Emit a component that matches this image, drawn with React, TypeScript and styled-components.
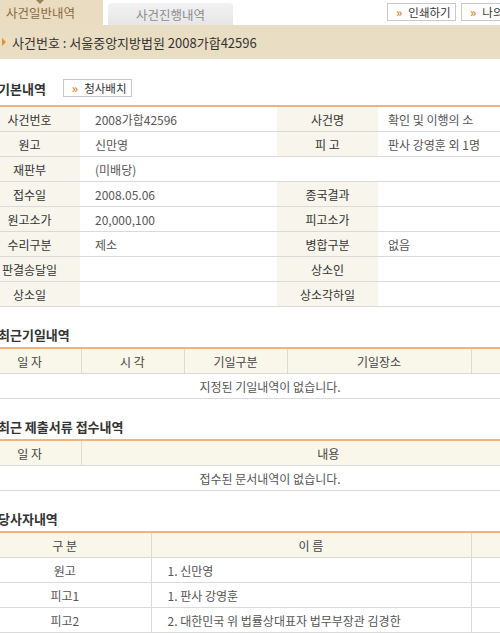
import React from "react";
import styled, { createGlobalStyle, css } from "styled-components";

const GlobalStyle = createGlobalStyle`
  body {
    margin: 0;
    overflow: hidden;
    background: #fff;
    font-family: "Noto Sans CJK KR", "Noto Sans", sans-serif;
    font-size: 12px;
    color: #444;
  }
`;

const Page = styled.div`
  width: 610px;
  margin-left: -35px;
`;

const TopRow = styled.div`
  display: flex;
  justify-content: space-between;
  height: 25px;
  padding-left: 13px;
`;

const Tabs = styled.div`
  display: flex;
  align-items: flex-end;
  gap: 5px;
`;

const Tab = styled.div<{ $active?: boolean }>`
  position: relative;
  width: 125px;
  display: flex;
  align-items: center;
  justify-content: center;
  font-size: 12.5px;
  ${({ $active }) =>
    $active
      ? css`
          height: 25px;
          background: #e9dcc0;
          color: #8a6a44;
          &::before {
            content: "";
            position: absolute;
            top: 0;
            left: 58px;
            border-left: 4px solid transparent;
            border-right: 4px solid transparent;
            border-top: 4px solid #a08058;
          }
        `
      : css`
          height: 22px;
          background: linear-gradient(#f2f2f2, #e6e6e6);
          border-radius: 4px 4px 0 0;
          color: #8c8c8c;
        `}
`;

const ButtonGroup = styled.div`
  display: flex;
  gap: 5px;
  padding: 3px 34px 0 0;
`;

const SmallButton = styled.button<{ $w: number }>`
  width: ${({ $w }) => $w}px;
  height: 18px;
  display: flex;
  align-items: center;
  gap: 6px;
  padding: 0 0 0 8px;
  background: #fff;
  border: 1px solid #c9c9c9;
  font-family: inherit;
  font-size: 11.5px;
  color: #333;
  white-space: nowrap;
  overflow: hidden;
  span {
    color: #e8862c;
    font-weight: bold;
    font-size: 12px;
    line-height: 1;
  }
`;

const HeaderBar = styled.div`
  height: 34px;
  background: #e9dec3;
  display: flex;
  align-items: center;
  gap: 6px;
  padding-left: 37px;
  font-size: 13px;
  color: #333;
  &::before {
    content: "";
    border-top: 4px solid transparent;
    border-bottom: 4px solid transparent;
    border-left: 4px solid #f08a2a;
  }
`;

const SectionHead = styled.div<{ $first?: boolean }>`
  display: flex;
  align-items: center;
  gap: 17px;
  height: 18px;
  padding-left: 33px;
  margin: ${({ $first }) => ($first ? "20px 0 8px" : "18px 0 4px")};
  h2 {
    margin: 0;
    font-size: 13px;
    font-weight: bold;
    color: #333;
  }
`;

const Table = styled.table`
  width: 610px;
  border-collapse: collapse;
  table-layout: fixed;
  border-top: 2px solid #efb37b;
  td,
  th {
    height: 24px;
    padding: 0;
    border-bottom: 1px solid #dadada;
    font-weight: normal;
    font-size: 12px;
    white-space: nowrap;
    overflow: hidden;
  }
  td:first-child,
  th:first-child {
    padding-left: 14px;
  }
`;

const Label = styled.td`
  background: #f8f6ec;
  text-align: center;
  color: #333;
`;

const Value = styled.td<{ $pad?: number }>`
  padding-left: ${({ $pad }) => $pad ?? 15}px !important;
  color: #555;
`;

const HeadCell = styled.th`
  background: #f9f6ea;
  color: #444;
  text-align: center;
  border-left: 1px solid #dedbd0;
  &:first-child {
    border-left: none;
  }
`;

const Cell = styled.td<{ $left?: boolean }>`
  color: #555;
  text-align: ${({ $left }) => ($left ? "left" : "center")};
  ${({ $left }) => $left && "padding-left: 16px !important;"}
  border-left: 1px solid #dadada;
  &:first-child {
    border-left: none;
  }
`;

const Empty = styled.td`
  text-align: center;
  color: #555;
  padding-left: 0 !important;
`;

const basicRows: [string, string, string?, string?][] = [
  ["사건번호", "2008가합42596", "사건명", "확인 및 이행의 소"],
  ["원고", "신만영", "피 고", "판사 강영훈 외 1명"],
  ["재판부", "(미배당)"],
  ["접수일", "2008.05.06", "종국결과", ""],
  ["원고소가", "20,000,100", "피고소가", ""],
  ["수리구분", "제소", "병합구분", "없음"],
  ["판결송달일", "", "상소인", ""],
  ["상소일", "", "상소각하일", ""],
];

const parties = [
  ["원고", "1. 신만영"],
  ["피고1", "1. 판사 강영훈"],
  ["피고2", "2. 대한민국 위 법률상대표자 법무부장관 김경한"],
];

export default function App() {
  return (
    <Page>
      <GlobalStyle />
      <TopRow>
        <Tabs>
          <Tab $active>사건일반내역</Tab>
          <Tab>사건진행내역</Tab>
        </Tabs>
        <ButtonGroup>
          <SmallButton $w={69}>
            <span>»</span>인쇄하기
          </SmallButton>
          <SmallButton $w={80}>
            <span>»</span>나의사건
          </SmallButton>
        </ButtonGroup>
      </TopRow>
      <HeaderBar>사건번호 : 서울중앙지방법원 2008가합42596</HeaderBar>

      <SectionHead $first>
        <h2>기본내역</h2>
        <SmallButton $w={69}>
          <span>»</span>청사배치
        </SmallButton>
      </SectionHead>
      <Table>
        <colgroup>
          <col style={{ width: 115 }} />
          <col style={{ width: 197 }} />
          <col style={{ width: 101 }} />
          <col style={{ width: 197 }} />
        </colgroup>
        <tbody>
          {basicRows.map(([l1, v1, l2, v2]) => (
            <tr key={l1}>
              <Label>{l1}</Label>
              {l2 === undefined ? (
                <Value colSpan={3}>{v1}</Value>
              ) : (
                <>
                  <Value>{v1}</Value>
                  <Label>{l2}</Label>
                  <Value $pad={10}>{v2}</Value>
                </>
              )}
            </tr>
          ))}
        </tbody>
      </Table>

      <SectionHead>
        <h2>최근기일내역</h2>
      </SectionHead>
      <Table>
        <colgroup>
          <col style={{ width: 116 }} />
          <col style={{ width: 103 }} />
          <col style={{ width: 103 }} />
          <col style={{ width: 184 }} />
          <col style={{ width: 104 }} />
        </colgroup>
        <thead>
          <tr>
            <HeadCell>일 자</HeadCell>
            <HeadCell>시 각</HeadCell>
            <HeadCell>기일구분</HeadCell>
            <HeadCell>기일장소</HeadCell>
            <HeadCell>결 과</HeadCell>
          </tr>
        </thead>
        <tbody>
          <tr>
            <Empty colSpan={5}>지정된 기일내역이 없습니다.</Empty>
          </tr>
        </tbody>
      </Table>

      <SectionHead>
        <h2>최근 제출서류 접수내역</h2>
      </SectionHead>
      <Table>
        <colgroup>
          <col style={{ width: 116 }} />
          <col style={{ width: 494 }} />
        </colgroup>
        <thead>
          <tr>
            <HeadCell>일 자</HeadCell>
            <HeadCell>내용</HeadCell>
          </tr>
        </thead>
        <tbody>
          <tr>
            <Empty colSpan={2}>접수된 문서내역이 없습니다.</Empty>
          </tr>
        </tbody>
      </Table>

      <SectionHead>
        <h2>당사자내역</h2>
      </SectionHead>
      <Table>
        <colgroup>
          <col style={{ width: 186 }} />
          <col style={{ width: 320 }} />
          <col style={{ width: 104 }} />
        </colgroup>
        <thead>
          <tr>
            <HeadCell>구 분</HeadCell>
            <HeadCell>이 름</HeadCell>
            <HeadCell>종국결과</HeadCell>
          </tr>
        </thead>
        <tbody>
          {parties.map(([kind, name]) => (
            <tr key={kind}>
              <Cell>{kind}</Cell>
              <Cell $left>{name}</Cell>
              <Cell></Cell>
            </tr>
          ))}
        </tbody>
      </Table>
    </Page>
  );
}
